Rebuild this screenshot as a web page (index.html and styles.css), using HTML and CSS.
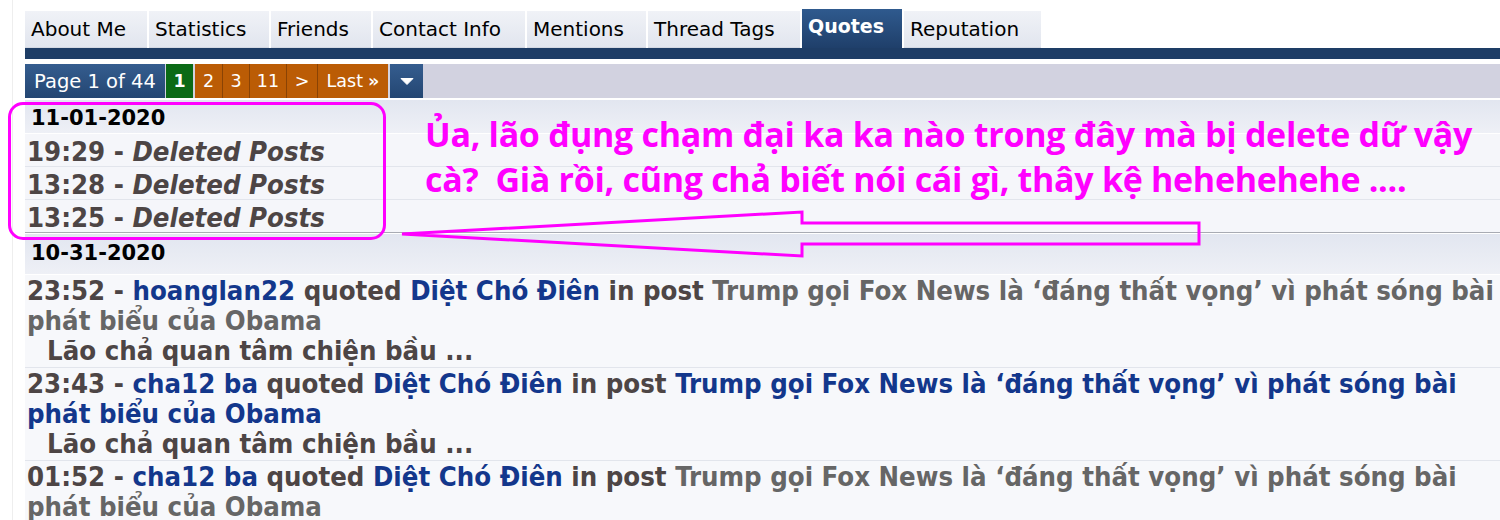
FILE: index.html
```html
<!DOCTYPE html>
<html lang="vi">
<head>
    <meta charset="UTF-8">
    <title>Quotes</title>
    <link rel="stylesheet" href="styles.css">
</head>
<body>
    <div class="frame">
    <div class="page">
        <!-- profile tabs -->
        <ul class="tabs">
            <li class="tab t-about">About Me</li>
            <li class="tab t-stats">Statistics</li>
            <li class="tab t-friends">Friends</li>
            <li class="tab t-contact">Contact Info</li>
            <li class="tab t-mentions">Mentions</li>
            <li class="tab t-tags">Thread Tags</li>
            <li class="tab active">Quotes</li>
            <li class="tab t-rep">Reputation</li>
        </ul>
        <div class="tabbar"></div>

        <!-- page navigation -->
        <div class="pagenav">
            <span class="pn-label">Page 1 of 44</span>
            <span class="pn-btn current">1</span>
            <span class="pn-btn w27">2</span>
            <span class="pn-btn w26">3</span>
            <span class="pn-btn w37">11</span>
            <span class="pn-btn w31">&gt;</span>
            <span class="pn-btn last">Last <b>&raquo;</b></span>
            <span class="pn-menu"><svg width="14" height="9" viewBox="0 0 14 9"><path d="M1 1.5h12l-6 6z" fill="#fff" stroke="#fff" stroke-linejoin="round"/></svg></span>
        </div>

        <!-- quotes list -->
        <div class="day">11-01-2020</div>
        <div class="row">19:29 - <em>Deleted Posts</em></div>
        <div class="row">13:28 - <em>Deleted Posts</em></div>
        <div class="row last-row">13:25 - <em>Deleted Posts</em></div>

        <div class="day day-2">10-31-2020</div>
        <div class="entry">
            <div>23:52 - <a class="user">hoanglan22</a> quoted <a class="user">Diệt Chó Điên</a> in post <span class="thread">Trump gọi Fox News là ‘đáng thất vọng’ vì phát sóng bài phát biểu của Obama</span></div>
            <div class="snippet">Lão chả quan tâm chiện bầu ...</div>
        </div>
        <div class="entry">
            <div>23:43 - <a class="user">cha12 ba</a> quoted <a class="user">Diệt Chó Điên</a> in post <a class="user">Trump gọi Fox News là ‘đáng thất vọng’ vì phát sóng bài phát biểu của Obama</a></div>
            <div class="snippet">Lão chả quan tâm chiện bầu ...</div>
        </div>
        <div class="entry">
            <div>01:52 - <a class="user">cha12 ba</a> quoted <a class="user">Diệt Chó Điên</a> in post <span class="thread">Trump gọi Fox News là ‘đáng thất vọng’ vì phát sóng bài phát biểu của Obama</span></div>
        </div>
    </div>
    </div>

    <!-- hand drawn annotation on top of the screenshot -->
    <div class="note-box"></div>
    <p class="note">Ủa, lão đụng chạm đại ka ka nào trong đây mà bị delete dữ vậy<br>cà?&nbsp; Già rồi, cũng chả biết nói cái gì, thây kệ hehehehehe ....</p>
    <svg class="note-arrow" width="1500" height="520" viewBox="0 0 1500 520">
        <path d="M402 234 L802 212 L802 223 L1199 223 L1199 244 L802 244 L802 256 Z" fill="none" stroke="#f0f" stroke-width="3" stroke-linejoin="miter"/>
    </svg>
</body>
</html>
```

FILE: styles.css
```css
body {
    margin: 0;
    background: #fff;
    font-family: "DejaVu Sans Condensed", "DejaVu Sans", sans-serif;
    position: relative;
    overflow: hidden;
    height: 520px;
}
.frame {
    margin-left: 12px;
    padding-left: 12px;
    border-left: 1px solid #eeeeee;
}

/* tabs */
.tabs {
    list-style: none;
    margin: 0;
    padding: 9px 0 0;
    display: flex;
    gap: 2px;
    align-items: flex-end;
}
.tab {
    height: 37px;
    line-height: 37px;
    padding: 0 6px;
    font-size: 20px;
    font-family: "DejaVu Sans", sans-serif;
    color: #000;
    background: linear-gradient(#f0f2f7, #e1e5ee);
    box-shadow: inset 0 -1px 0 #d4d8e2;
}
.t-about { width: 110px; }
.t-stats { width: 108px; }
.t-friends { width: 88px; }
.t-contact { width: 140px; }
.t-mentions { width: 107px; }
.t-tags { width: 140px; }
.t-rep { width: 125px; }
.tab.active {
    height: 39px;
    line-height: 34px;
    width: 88px;
    color: #fff;
    font-weight: bold;
    font-size: 19px;
    background: linear-gradient(#2f5a8e, #1f3f6a);
    box-shadow: none;
}
.tabbar {
    height: 11px;
    background: #1e3d66;
    margin-bottom: 5px;
}

/* page navigation */
.pagenav {
    height: 34px;
    background: #d2d2e0;
    display: flex;
    align-items: stretch;
    margin-bottom: 2px;
}
.pagenav > span {
    display: flex;
    align-items: center;
    justify-content: center;
    font-family: "DejaVu Sans", sans-serif;
    color: #fff;
}
.pn-label {
    width: 140px;
    font-size: 19.5px;
    background: linear-gradient(#355d8f, #244672);
    margin-right: 1px;
}
.pn-btn {
    background: #bb5c05;
    border-left: 1px solid #8a4304;
    font-size: 17.5px;
    box-sizing: border-box;
}
.pn-btn b { margin-left: 5px; }
.pn-btn.current {
    width: 27px;
    background: #0b6a16;
    font-weight: bold;
    border: none;
    margin-right: 2px;
}
.w27 { width: 27px; border-left: none !important; }
.w26 { width: 27px; }
.w37 { width: 37px; }
.w31 { width: 31px; }
.pn-btn.last { width: 71px; }
.pn-menu {
    width: 33px;
    margin-left: 2px;
    background: linear-gradient(#355d8f, #244672);
}

/* quote list */
.day {
    height: 33px;
    line-height: 36px;
    padding-left: 6px;
    font-family: "DejaVu Sans", sans-serif;
    font-size: 21px;
    font-weight: bold;
    color: #000;
    background: linear-gradient(#e2e6f0, #eef0f6);
    border-bottom: 1px solid #fff;
}
.day-2 {
    height: 40px;
    line-height: 38px;
}
.row {
    height: 32px;
    line-height: 36px;
    padding-left: 2px;
    font-size: 27.3px;
    font-weight: bold;
    color: #4d4545;
    background: #f5f6fa;
    border-bottom: 1px solid #e2e5ec;
}
.row.last-row {
    border-bottom: 1px solid #a8abb3;
    margin-bottom: 1px;
}
.entry {
    padding: 1px 0 1px 2px;
    font-size: 27.3px;
    line-height: 30px;
    font-weight: bold;
    color: #4d4545;
    background: #f7f8fb;
    border-bottom: 1px solid #e2e5ec;
}
.user { color: #13378c; }
.thread { color: #666; }
.snippet { padding-left: 20px; }

/* annotation */
.note-box {
    position: absolute;
    left: 8px;
    top: 102px;
    width: 372px;
    height: 132px;
    border: 3px solid #f0f;
    border-radius: 15px;
}
.note {
    position: absolute;
    left: 425px;
    top: 112px;
    margin: 0;
    font-family: "Open Sans", sans-serif;
    font-weight: bold;
    font-size: 34px;
    line-height: 45px;
    letter-spacing: -0.3px;
    color: #f0f;
    white-space: nowrap;
}
.note-arrow {
    position: absolute;
    left: 0;
    top: 0;
}
```
